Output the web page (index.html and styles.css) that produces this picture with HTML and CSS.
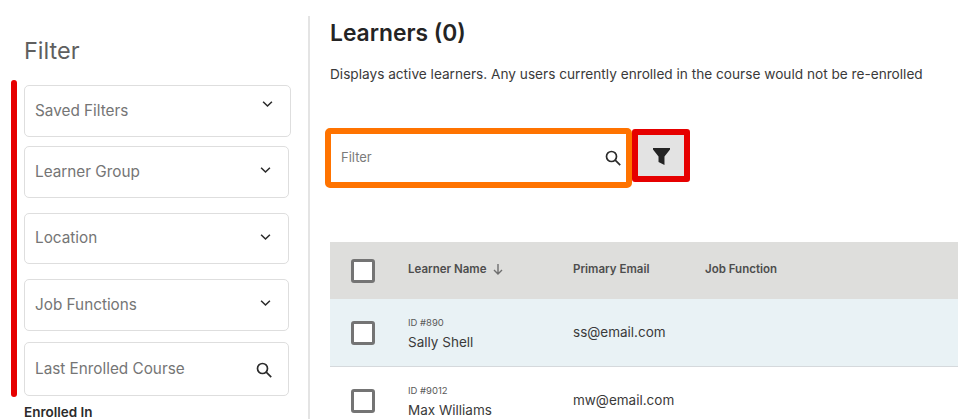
FILE: index.html
```html
<!DOCTYPE html>
<html lang="en">
<head>
  <meta charset="UTF-8" />
  <title>Learners</title>
  <link rel="stylesheet" href="styles.css">
</head>
<body>
  <div class="page">
    <aside class="sidebar">
      <div class="red-bar"></div>
      <h2 class="filter-title">Filter</h2>
      <div class="field field-saved">
        <span>Saved Filters</span>
        <svg class="chevron" viewBox="0 0 12 8"><path d="M1.2 1.5 6 6.2l4.8-4.7" /></svg>
      </div>
      <div class="field field-group">
        <span>Learner Group</span>
        <svg class="chevron" viewBox="0 0 12 8"><path d="M1.2 1.5 6 6.2l4.8-4.7" /></svg>
      </div>
      <div class="field field-location">
        <span>Location</span>
        <svg class="chevron" viewBox="0 0 12 8"><path d="M1.2 1.5 6 6.2l4.8-4.7" /></svg>
      </div>
      <div class="field field-jobs">
        <span>Job Functions</span>
        <svg class="chevron" viewBox="0 0 12 8"><path d="M1.2 1.5 6 6.2l4.8-4.7" /></svg>
      </div>
      <div class="field field-course">
        <span>Last Enrolled Course</span>
        <svg class="search" viewBox="0 0 16 16"><circle cx="6.5" cy="6.5" r="5" /><path d="m10.2 10.2 5 5" /></svg>
      </div>
      <div class="enrolled">Enrolled In</div>
    </aside>

    <main class="main">
      <h1 class="title">Learners (0)</h1>
      <p class="intro">Displays active learners. Any users currently enrolled in the course would not be re-enrolled</p>

      <div class="toolbar">
        <div class="filter-input">
          <span>Filter</span>
          <svg class="search" viewBox="0 0 16 16"><circle cx="6.5" cy="6.5" r="5" /><path d="m10.2 10.2 5 5" /></svg>
        </div>
        <button class="filter-btn">
          <svg viewBox="0 0 16 16"><path d="M0 0h16v1.4L10.8 8v8L5.2 13.2V8L0 1.4z" /></svg>
        </button>
      </div>

      <div class="table">
        <div class="row head">
          <div class="cell-check"><span class="checkbox"></span></div>
          <div class="cell-name">Learner Name
            <svg class="sort" viewBox="0 0 10 11"><path d="M5 0v10M1 6l4 4 4-4" /></svg>
          </div>
          <div class="cell-email">Primary Email</div>
          <div class="cell-job">Job Function</div>
        </div>
        <div class="row learner selected">
          <div class="cell-check"><span class="checkbox"></span></div>
          <div class="cell-name">
            <div class="learner-id">ID #890</div>
            <div class="learner-name">Sally Shell</div>
          </div>
          <div class="cell-email">ss@email.com</div>
        </div>
        <div class="row learner">
          <div class="cell-check"><span class="checkbox"></span></div>
          <div class="cell-name">
            <div class="learner-id">ID #9012</div>
            <div class="learner-name">Max Williams</div>
          </div>
          <div class="cell-email">mw@email.com</div>
        </div>
      </div>
    </main>
  </div>
</body>
</html>
```

FILE: styles.css
```css
html, body {
  height: 100%;
}
body {
  margin: 0;
  background: #fff;
  color: #2b2b2b;
  font-family: "Inter", "Liberation Sans", sans-serif;
  overflow: hidden;
}
.page {
  display: flex;
  height: 419px;
  overflow: hidden;
}

/* sidebar */
.sidebar {
  position: relative;
  box-sizing: border-box;
  flex: 0 0 310px;
  height: 403px;
  margin-top: 16px;
  padding: 22px 0 0 24px;
  border-right: 2px solid #e4e4e4;
}
.red-bar {
  position: absolute;
  left: 11px;
  top: 64px;
  width: 6px;
  height: 317px;
  background: #e60000;
  border-radius: 3px;
}
.filter-title {
  margin: 0 0 21px;
  height: 26px;
  font-size: 23.5px;
  line-height: 26px;
  font-weight: 400;
  color: #5f5f5f;
}
.field {
  box-sizing: border-box;
  display: flex;
  justify-content: space-between;
  align-items: center;
  width: 265px;
  height: 52px;
  padding: 0 17px 0 10px;
  border: 1px solid #dedede;
  border-radius: 5px;
  font-size: 15.3px;
  color: #757575;
}
.field span {
  padding-bottom: 2px;
}
.field-saved {
  width: 267px;
  margin-bottom: 9px;
}
.field-group {
  margin-bottom: 15px;
}
.field-location {
  height: 51px;
  margin-bottom: 15px;
}
.field-jobs {
  margin-bottom: 11px;
}
.field-course {
  height: 54px;
  margin-bottom: 8px;
  padding-right: 16px;
}
.chevron {
  width: 11px;
  height: 8px;
  margin-top: -14px;
  fill: none;
  stroke: #2b2b2b;
  stroke-width: 1.7;
}
.field-group .chevron,
.field-location .chevron,
.field-jobs .chevron {
  margin-top: -4px;
}
.search {
  width: 16px;
  height: 16px;
  fill: none;
  stroke: #2b2b2b;
  stroke-width: 1.7;
}
.field-course .search {
  margin-top: 2px;
}
.enrolled {
  font-size: 13.5px;
  font-weight: 600;
  color: #2b2b2b;
}

/* main column */
.main {
  flex: 1;
  min-width: 0;
  padding: 0 0 0 20px;
}
.title {
  margin: 19px 0 0;
  height: 28px;
  font-size: 22.8px;
  line-height: 28px;
  font-weight: 600;
  color: #242424;
}
.intro {
  margin: 17px 0 0;
  height: 20px;
  font-size: 13.65px;
  line-height: 20px;
  color: #3a3a3a;
  white-space: nowrap;
}
.toolbar {
  display: flex;
  align-items: flex-start;
  margin: 44px 0 0 -5px;
  height: 59px;
}
.filter-input {
  box-sizing: border-box;
  display: flex;
  justify-content: space-between;
  align-items: center;
  width: 307px;
  height: 60px;
  padding: 0 5px 0 10px;
  border: 6px solid #ff7300;
  border-radius: 5px;
  font-size: 13px;
  color: #7b7b7b;
}
.filter-input span {
  padding-bottom: 2px;
}
.filter-btn {
  box-sizing: border-box;
  display: flex;
  justify-content: center;
  align-items: center;
  width: 58px;
  height: 53px;
  margin: 1px 0 0 0;
  padding: 0;
  background: #e3e3e3;
  border: 6px solid #e60000;
  border-radius: 3px;
}
.filter-btn svg {
  width: 17px;
  height: 17px;
  margin-top: 2px;
  fill: #242424;
}

/* table */
.table {
  margin-top: 55px;
}
.row {
  display: flex;
  align-items: center;
}
.head {
  height: 57px;
  background: #dededc;
  font-size: 11.5px;
  font-weight: 600;
  color: #4d4d4d;
}
.head .cell-name,
.head .cell-email,
.head .cell-job {
  padding-bottom: 3px;
}
.learner {
  box-sizing: border-box;
  height: 68px;
  border-bottom: 1px solid #d5d9dc;
  font-size: 13.5px;
  color: #3a3a3a;
}
.selected {
  background: #e9f2f5;
}
.cell-check {
  flex: 0 0 78px;
  padding-left: 21px;
  box-sizing: border-box;
}
.checkbox {
  display: block;
  box-sizing: border-box;
  width: 24px;
  height: 24px;
  background: #fff;
  border: 3px solid #747474;
  border-radius: 3px;
}
.cell-name {
  flex: 0 0 165px;
}
.learner .cell-name {
  padding-top: 2px;
}
.cell-email {
  flex: 0 0 132px;
}
.learner .cell-email {
  padding-bottom: 1px;
}
.sort {
  width: 10px;
  height: 11px;
  margin-left: 4px;
  vertical-align: -2px;
  fill: none;
  stroke: #6f6f6f;
  stroke-width: 1.4;
}
.learner-id {
  font-size: 9.5px;
  line-height: 12px;
  color: #5a5a5a;
}
.learner-name {
  margin-top: 4px;
  line-height: 18px;
}
```
